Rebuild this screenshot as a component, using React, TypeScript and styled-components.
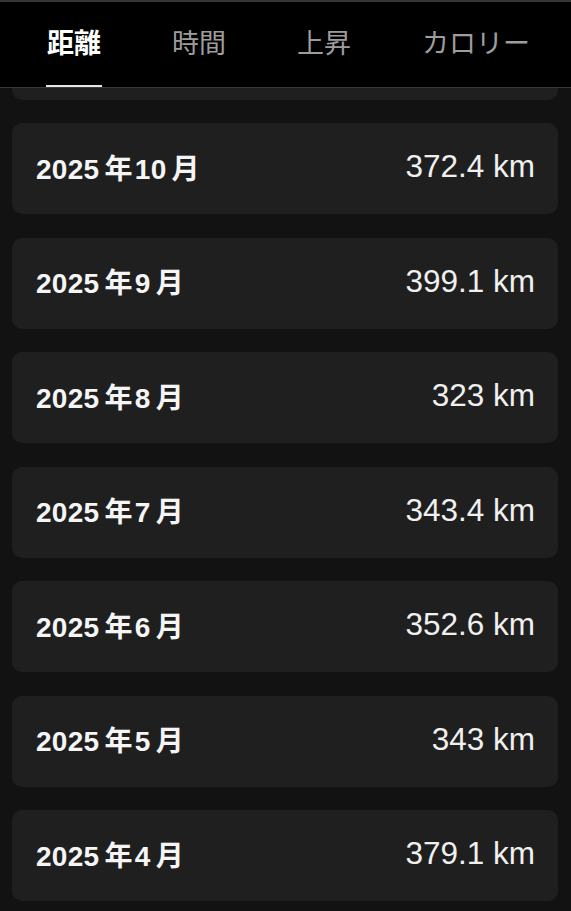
import React from 'react';
import styled, { createGlobalStyle } from 'styled-components';

interface monthRowProps {
  year: number;
  month: number;
  value: string;
}

const tabList = ['距離', '時間', '上昇', 'カロリー'];

const monthList = [
  { year: 2025, month: 11, value: '121.8 km' },
  { year: 2025, month: 10, value: '372.4 km' },
  { year: 2025, month: 9, value: '399.1 km' },
  { year: 2025, month: 8, value: '323 km' },
  { year: 2025, month: 7, value: '343.4 km' },
  { year: 2025, month: 6, value: '352.6 km' },
  { year: 2025, month: 5, value: '343 km' },
  { year: 2025, month: 4, value: '379.1 km' },
  { year: 2025, month: 3, value: '351.2 km' },
];

const GlobalStyle = createGlobalStyle`
  html, body {
    margin: 0;
    padding: 0;
    background-color: #121212;
  }
  * {
    box-sizing: border-box;
  }
`;

const Screen = styled.div`
  width: 571px;
  height: 911px;
  display: flex;
  flex-direction: column;
  overflow: hidden;
  background-color: #121212;
  font-family: 'Liberation Sans', 'Noto Sans CJK JP', sans-serif;
`;

const TabBar = styled.div`
  height: 88px;
  flex-shrink: 0;
  display: flex;
  align-items: stretch;
  gap: 71px;
  padding-left: 47px;
  background-color: #000;
  border-top: 2px solid #353535;
  border-bottom: 1px solid #3a3a3a;
`;

const Tab = styled.div<{ $active?: boolean }>`
  position: relative;
  display: flex;
  align-items: center;
  padding-bottom: 6px;
  font-family: 'Noto Sans CJK JP', sans-serif;
  font-size: 27px;
  line-height: 40px;
  white-space: nowrap;
  font-weight: ${p => (p.$active ? 700 : 400)};
  color: ${p => (p.$active ? '#ffffff' : '#9d9d9d')};

  &::after {
    content: '';
    display: ${p => (p.$active ? 'block' : 'none')};
    position: absolute;
    left: -1px;
    right: -1px;
    bottom: 0;
    height: 2px;
    background-color: #e6e6e6;
  }
`;

const ScrollArea = styled.div`
  flex: 1;
  overflow: hidden;
`;

const MonthList = styled.div`
  display: flex;
  flex-direction: column;
  gap: 23.5px;
  margin-top: -79.5px;
  padding: 0 13px 0 12px;
`;

const MonthCard = styled.div`
  height: 91px;
  display: flex;
  align-items: center;
  justify-content: space-between;
  padding: 0 23px 0 24px;
  border-radius: 10px;
  background-color: #1f1f1f;
`;

const MonthLabel = styled.div`
  font-size: 28px;
  line-height: 42px;
  font-weight: 700;
  letter-spacing: 0.3px;
  color: #f5f5f5;
  white-space: nowrap;
  margin-top: 2px;
`;

const Unit = styled.span`
  margin: 0 2px 0 5px;
`;

const MonthValue = styled.div`
  font-size: 31.5px;
  line-height: 42px;
  font-weight: 400;
  color: #f0f0f0;
  margin-top: -5px;
  white-space: nowrap;
`;

const MonthRow: React.FC<monthRowProps> = props => {
  const { year, month, value } = props;
  return (
    <MonthCard>
      <MonthLabel>
        {year}
        <Unit>年</Unit>
        {month}
        <Unit>月</Unit>
      </MonthLabel>
      <MonthValue>{value}</MonthValue>
    </MonthCard>
  );
};

const App = () => {
  return (
    <Screen>
      <GlobalStyle />
      <TabBar>
        {tabList.map((tab, i) => (
          <Tab key={tab} $active={i === 0}>
            {tab}
          </Tab>
        ))}
      </TabBar>
      <ScrollArea>
        <MonthList>
          {monthList.map(row => (
            <MonthRow key={`${row.year}-${row.month}`} {...row} />
          ))}
        </MonthList>
      </ScrollArea>
    </Screen>
  );
};

export default App;
